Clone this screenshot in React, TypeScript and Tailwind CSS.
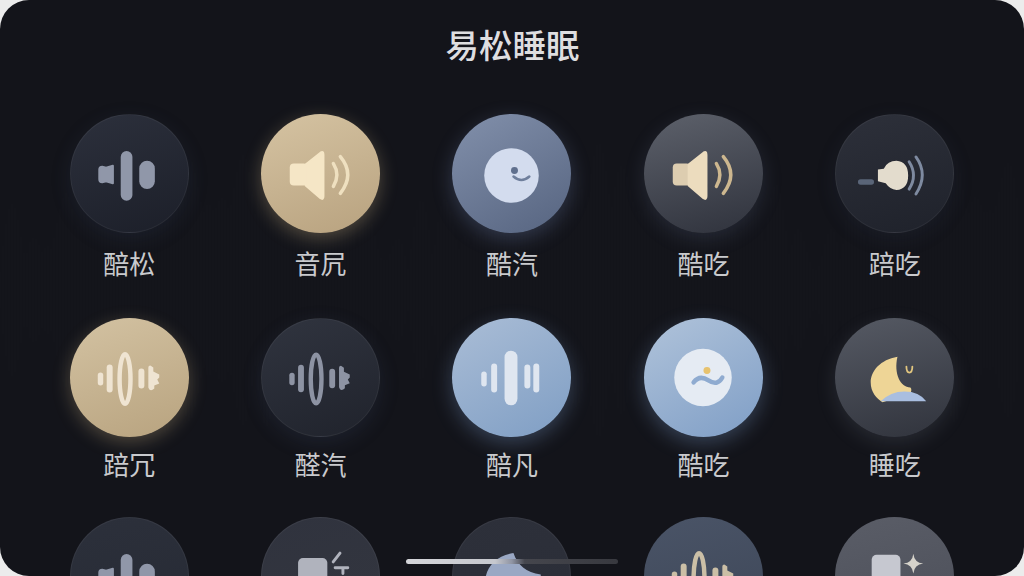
import type { ReactNode } from "react";

type Item = { label: string; circle: string; icon: ReactNode };

const Speaker = ({ body, wave, box }: { body: string; wave: string; box?: string }) => (
  <>
    <rect x="29" y="50" width="18" height="22" rx="4" fill={box ?? body} />
    <path
      d="M45 51 L60 39 Q63 37 63 41 V83 Q63 87 60 85 L45 72 Z"
      fill={body}
      stroke={body}
      strokeWidth="2"
      strokeLinejoin="round"
    />
    <path d="M73 50 Q80 61 73 73" fill="none" stroke={wave} strokeWidth="3.5" strokeLinecap="round" />
    <path d="M80 43 Q95 61 80 80" fill="none" stroke={wave} strokeWidth="3.5" strokeLinecap="round" />
  </>
);

const TrioBars = ({ fill }: { fill: string }) => (
  <g fill={fill}>
    <path
      d="M29 56 Q29 53 32 53 L36 54 L43 52 V70 L36 68 L32 69 Q29 69 29 66 Z"
      stroke={fill}
      strokeWidth="2"
      strokeLinejoin="round"
    />
    <rect x="51" y="37" width="12" height="51" rx="6" />
    <rect x="70" y="47" width="16" height="29" rx="8" />
  </g>
);

const RingWave = ({ fill }: { fill: string }) => (
  <g fill={fill}>
    <rect x="28" y="55" width="5.5" height="13" rx="2.75" />
    <rect x="37" y="47" width="6" height="28" rx="3" />
    <ellipse cx="55.5" cy="61.5" rx="5.5" ry="25" fill="none" stroke={fill} strokeWidth="4.5" />
    <rect x="69" y="51" width="6" height="20" rx="3" />
    <path d="M79 50 Q79 48 81 48 L84 50 V54 L90 57 V60 L88 62 L90 66 L85 68 V71 Q82 74 80 72 L79 70 Z" />
  </g>
);

const BlueBars = () => (
  <g fill="#dfe6f0">
    <rect x="29.5" y="54" width="5.5" height="15" rx="2.75" />
    <rect x="39.5" y="46" width="6" height="29" rx="3" />
    <rect x="53" y="33" width="13" height="55" rx="6.5" />
    <rect x="73" y="47" width="6" height="24" rx="3" />
    <rect x="82" y="46" width="6" height="29" rx="3" />
  </g>
);

const Moon = ({ fill }: { fill: string }) => (
  <path
    d="M63 39 C46 42 36 53 36 65 C36 75 42 81 48 85 L76 76 Q78 72 76 70 C66 70 59 56 63 39 Z"
    fill={fill}
  />
);

const row1: Item[] = [
  {
    label: "醅松",
    circle:
      "bg-[linear-gradient(160deg,#2c303c,#1c1f29)] border border-white/5 shadow-[0_6px_20px_rgba(60,75,110,0.18)]",
    icon: <TrioBars fill="#9097a9" />,
  },
  {
    label: "音凥",
    circle: "bg-[linear-gradient(160deg,#d5c3a2,#b8a27f)] shadow-[0_5px_18px_rgba(214,190,140,0.32)]",
    icon: <Speaker body="#f5e6c6" wave="#efe0c0" />,
  },
  {
    label: "酷汽",
    circle: "bg-[linear-gradient(150deg,#8290ab,#566480)] shadow-[0_6px_20px_rgba(120,140,190,0.3)]",
    icon: (
      <>
        <circle cx="60" cy="62" r="27.5" fill="#d3dcee" />
        <circle cx="63" cy="57" r="3.5" fill="#5f6f8d" />
        <path d="M62 63 Q70 70 78 63" fill="none" stroke="#6f7f9c" strokeWidth="2.5" strokeLinecap="round" />
      </>
    ),
  },
  {
    label: "酷吃",
    circle: "bg-[linear-gradient(165deg,#5d616b,#2f323c)] shadow-[0_6px_20px_rgba(120,140,180,0.18)]",
    icon: <Speaker body="#ecdcbe" box="#ddcdb0" wave="#cdb78f" />,
  },
  {
    label: "踣吃",
    circle:
      "bg-[linear-gradient(165deg,#2d303a,#1f222b)] border border-white/5 shadow-[0_6px_20px_rgba(60,75,110,0.15)]",
    icon: (
      <>
        <rect x="22.5" y="66" width="16.5" height="5.5" rx="2.75" fill="#5a6578" />
        <path
          d="M43 56 L49 55 Q53 47 62 47 Q74 48 74 62 Q74 76 62 77 Q55 76 51 70 L43 68 Z"
          fill="#e3dccd"
        />
        <path d="M75 48 Q84 62 75 76" fill="none" stroke="#7e8aa0" strokeWidth="3" strokeLinecap="round" />
        <path d="M82 43 Q95 61 82 81" fill="none" stroke="#7e8aa0" strokeWidth="3" strokeLinecap="round" />
      </>
    ),
  },
];

const row2: Item[] = [
  {
    label: "踣冗",
    circle: "bg-[linear-gradient(160deg,#d3c2a2,#b8a37f)] shadow-[0_5px_18px_rgba(214,190,140,0.3)]",
    icon: <RingWave fill="#efe4d2" />,
  },
  {
    label: "醛汽",
    circle:
      "bg-[linear-gradient(160deg,#30343f,#20232c)] border border-white/5 shadow-[0_6px_20px_rgba(70,85,120,0.2)]",
    icon: <RingWave fill="#8d93a3" />,
  },
  {
    label: "醅凡",
    circle: "bg-[linear-gradient(150deg,#aabdd6,#7f9ec4)] shadow-[0_6px_20px_rgba(130,165,215,0.32)]",
    icon: <BlueBars />,
  },
  {
    label: "酷吃",
    circle: "bg-[linear-gradient(150deg,#b0c3da,#7f9ec6)] shadow-[0_6px_20px_rgba(130,165,215,0.32)]",
    icon: (
      <>
        <circle cx="59.5" cy="60" r="29" fill="#e5ebf3" />
        <circle cx="63.5" cy="53" r="3.5" fill="#e7c26e" />
        <path d="M50 65 Q56 57 65 63 Q74 69 79 60" fill="none" stroke="#8fabd0" strokeWidth="4.5" strokeLinecap="round" />
      </>
    ),
  },
  {
    label: "睡吃",
    circle: "bg-[linear-gradient(165deg,#565a64,#30333c)] shadow-[0_6px_20px_rgba(150,160,180,0.16)]",
    icon: (
      <>
        <Moon fill="#eed596" />
        <path d="M46 84 Q56 74 70 74 Q85 74 92 84 Z" fill="#a9bee0" />
        <path d="M72 49 Q72 55 75 55 Q78 55 78 49" fill="none" stroke="#e3c77f" strokeWidth="1.8" strokeLinecap="round" />
      </>
    ),
  },
];

const row3: Item[] = [
  {
    label: "",
    circle: "bg-[linear-gradient(165deg,#2c303b,#262a34)] border border-white/5",
    icon: <TrioBars fill="#9097a9" />,
  },
  {
    label: "",
    circle: "bg-[linear-gradient(165deg,#30333e,#33363f)] border border-white/5",
    icon: (
      <>
        <rect x="37" y="41" width="30" height="40" rx="5" fill="#b0b3bd" />
        <path d="M73 45 L80 36" stroke="#b0b3bd" strokeWidth="3" strokeLinecap="round" />
        <path d="M75 51 H88 M83 51 V57" stroke="#b0b3bd" strokeWidth="3" strokeLinecap="round" />
      </>
    ),
  },
  {
    label: "",
    circle: "bg-[linear-gradient(165deg,#2d303a,#2a2d37)] border border-white/5",
    icon: (
      <path
        d="M62 36 C45 38 33 50 33 66 V90 H90 V58 C75 56 66 48 62 36 Z"
        fill="#9aa8c4"
      />
    ),
  },
  {
    label: "",
    circle: "bg-[linear-gradient(165deg,#4a5467,#3d4657)]",
    icon: <RingWave fill="#cbbfa6" />,
  },
  {
    label: "",
    circle: "bg-[linear-gradient(165deg,#5a5d67,#4b4e58)]",
    icon: (
      <>
        <rect x="37" y="38" width="29" height="40" rx="5" fill="#c6c8d0" />
        <path d="M79 37 Q80 46 89 47 Q80 48 79 57 Q78 48 69 47 Q78 46 79 37 Z" fill="#d6d3cb" />
      </>
    ),
  },
];

// faint sound wave behind the grid
const waveBars = Array.from({ length: 340 }, (_, i) => {
  const x = i * 3;
  const h =
    18 +
    Math.abs(Math.sin(i * 0.37) * Math.cos(i * 0.11)) * 70 +
    Math.abs(Math.sin(i * 0.023)) * 60;
  return { x, h };
});

const Tile = ({ item }: { item: Item }) => (
  <div className="flex flex-col items-center">
    <div className={`h-[119px] w-[119px] shrink-0 rounded-full ${item.circle}`}>
      <svg viewBox="0 0 120 120" className="h-full w-full overflow-visible">
        {item.icon}
      </svg>
    </div>
    {item.label && <span className="mt-[var(--gap)] text-[26px] leading-[30px] text-[#c9cacd]">{item.label}</span>}
  </div>
);

export default function App() {
  return (
    <div className="h-[576px] w-[1024px] overflow-hidden bg-[#ececec] font-['Noto_Sans_CJK_SC',sans-serif]">
      <div className="relative h-full overflow-hidden rounded-[29px] bg-[#13141a]">
        <svg className="absolute inset-0 h-full w-full" viewBox="0 0 1024 576">
          {waveBars.map((b) => (
            <line
              key={b.x}
              x1={b.x}
              x2={b.x}
              y1={290 - b.h}
              y2={290 + b.h}
              stroke="#ffffff"
              strokeOpacity="0.016"
              strokeWidth="1"
            />
          ))}
        </svg>

        <div className="relative">
          <h1 className="flex h-[114px] justify-center pt-[20px] pl-[1px] text-[33.5px] leading-[48px] font-medium text-[#dedee0]">
            易松睡眠
          </h1>

          <div className="grid grid-cols-5 px-[33.5px] [--gap:15px]">
            {row1.map((item, i) => (
              <Tile key={i} item={item} />
            ))}
          </div>
          <div className="mt-[40px] grid grid-cols-5 px-[33.5px] [--gap:12px]">
            {row2.map((item, i) => (
              <Tile key={i} item={item} />
            ))}
          </div>
          <div className="mt-[38px] grid grid-cols-5 px-[33.5px]">
            {row3.map((item, i) => (
              <Tile key={i} item={item} />
            ))}
          </div>
        </div>

        {/* home indicator */}
        <div className="absolute bottom-[12px] left-[406px] h-[5px] w-[212px] rounded-full bg-[linear-gradient(90deg,#d4d5d9_0%,#c6c8ce_42%,#8f94a3_50%,#45464d_56%,#38393f_100%)]" />
      </div>
    </div>
  );
}
